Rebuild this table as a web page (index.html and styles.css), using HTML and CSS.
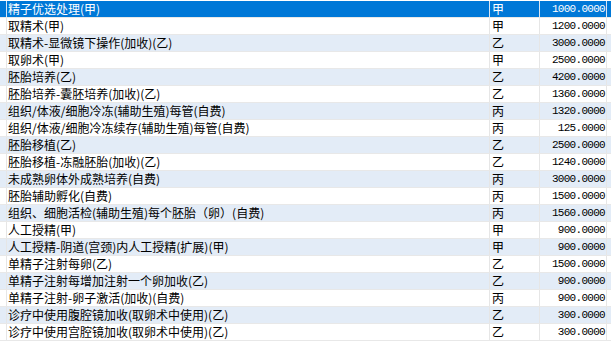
FILE: index.html
```html
<!DOCTYPE html>
<html>
<head>
<meta charset="utf-8">
<link rel="stylesheet" href="styles.css">
</head>
<body>
<div class="grid">
  <div class="row sel"><div class="c0"></div><div class="name">精子优选处理(甲)</div><div class="cls">甲</div><div class="num">1000.0000</div><div class="c4"></div></div>
  <div class="row"><div class="c0"></div><div class="name">取精术(甲)</div><div class="cls">甲</div><div class="num">1200.0000</div><div class="c4"></div></div>
  <div class="row alt"><div class="c0"></div><div class="name">取精术-显微镜下操作(加收)(乙)</div><div class="cls">乙</div><div class="num">3000.0000</div><div class="c4"></div></div>
  <div class="row"><div class="c0"></div><div class="name">取卵术(甲)</div><div class="cls">甲</div><div class="num">2500.0000</div><div class="c4"></div></div>
  <div class="row alt"><div class="c0"></div><div class="name">胚胎培养(乙)</div><div class="cls">乙</div><div class="num">4200.0000</div><div class="c4"></div></div>
  <div class="row"><div class="c0"></div><div class="name">胚胎培养-囊胚培养(加收)(乙)</div><div class="cls">乙</div><div class="num">1360.0000</div><div class="c4"></div></div>
  <div class="row alt"><div class="c0"></div><div class="name">组织/体液/细胞冷冻(辅助生殖)每管(自费)</div><div class="cls">丙</div><div class="num">1320.0000</div><div class="c4"></div></div>
  <div class="row"><div class="c0"></div><div class="name">组织/体液/细胞冷冻续存(辅助生殖)每管(自费)</div><div class="cls">丙</div><div class="num">125.0000</div><div class="c4"></div></div>
  <div class="row alt"><div class="c0"></div><div class="name">胚胎移植(乙)</div><div class="cls">乙</div><div class="num">2500.0000</div><div class="c4"></div></div>
  <div class="row"><div class="c0"></div><div class="name">胚胎移植-冻融胚胎(加收)(乙)</div><div class="cls">乙</div><div class="num">1240.0000</div><div class="c4"></div></div>
  <div class="row alt"><div class="c0"></div><div class="name">未成熟卵体外成熟培养(自费)</div><div class="cls">丙</div><div class="num">3000.0000</div><div class="c4"></div></div>
  <div class="row"><div class="c0"></div><div class="name">胚胎辅助孵化(自费)</div><div class="cls">丙</div><div class="num">1500.0000</div><div class="c4"></div></div>
  <div class="row alt"><div class="c0"></div><div class="name">组织、细胞活检(辅助生殖)每个胚胎（卵）(自费)</div><div class="cls">丙</div><div class="num">1560.0000</div><div class="c4"></div></div>
  <div class="row"><div class="c0"></div><div class="name">人工授精(甲)</div><div class="cls">甲</div><div class="num">900.0000</div><div class="c4"></div></div>
  <div class="row alt"><div class="c0"></div><div class="name">人工授精-阴道(宫颈)内人工授精(扩展)(甲)</div><div class="cls">甲</div><div class="num">900.0000</div><div class="c4"></div></div>
  <div class="row"><div class="c0"></div><div class="name">单精子注射每卵(乙)</div><div class="cls">乙</div><div class="num">1500.0000</div><div class="c4"></div></div>
  <div class="row alt"><div class="c0"></div><div class="name">单精子注射每增加注射一个卵加收(乙)</div><div class="cls">乙</div><div class="num">900.0000</div><div class="c4"></div></div>
  <div class="row"><div class="c0"></div><div class="name">单精子注射-卵子激活(加收)(自费)</div><div class="cls">丙</div><div class="num">900.0000</div><div class="c4"></div></div>
  <div class="row alt"><div class="c0"></div><div class="name">诊疗中使用腹腔镜加收(取卵术中使用)(乙)</div><div class="cls">乙</div><div class="num">300.0000</div><div class="c4"></div></div>
  <div class="row"><div class="c0"></div><div class="name">诊疗中使用宫腔镜加收(取卵术中使用)(乙)</div><div class="cls">乙</div><div class="num">300.0000</div><div class="c4"></div></div>
</div>
</body>
</html>
```
FILE: styles.css
```css
html, body {
  margin: 0;
  padding: 0;
  background: #ffffff;
}
.grid {
  padding-top: 1px;
  width: 611px;
  font-family: "Noto Sans CJK SC", "Liberation Sans", sans-serif;
  font-size: 12px;
  color: #000000;
}
.row {
  display: grid;
  grid-template-columns: 7px 483px 50px 67px 4px;
  height: 17px;
  box-sizing: border-box;
  border-bottom: 1px solid #e8e8e8;
  background: #ffffff;
}
.row.alt {
  background: #e3ecf7;
}
.row.sel {
  background: #0078d7;
  color: #ffffff;
}
.row > div {
  box-sizing: border-box;
  border-right: 1px solid #e6e6e6;
  line-height: 16px;
  white-space: nowrap;
  overflow: hidden;
}
.row > .c4 {
  border-right: none;
}
.row.sel > div {
  border-right-color: #d8e6f5;
}
.name {
  padding-left: 1px;
}
.cls {
  padding-left: 2px;
}
.num {
  text-align: right;
  padding-right: 1px;
  font-family: "Liberation Mono", "DejaVu Sans Mono", monospace;
  font-size: 11px;
  letter-spacing: -0.7px;
}
```
